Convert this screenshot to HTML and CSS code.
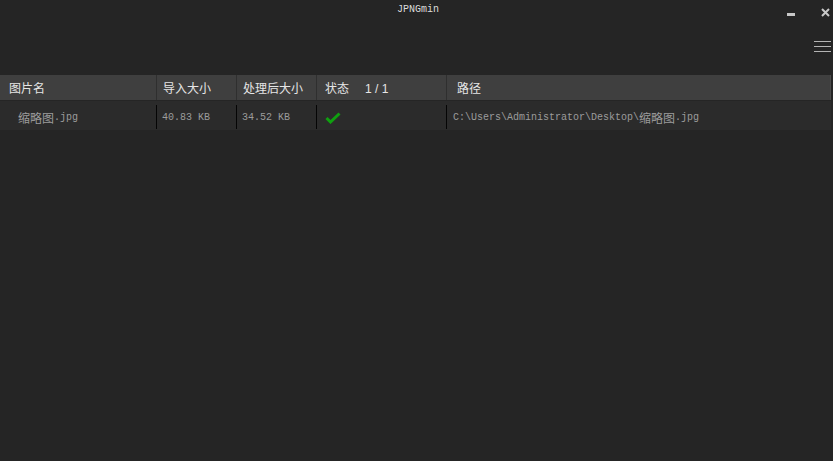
FILE: index.html
```html
<!DOCTYPE html>
<html lang="zh">
<head>
<meta charset="utf-8">
<title>JPNGmin</title>
<link rel="stylesheet" href="styles.css">
</head>
<body>
<div class="app">
  <div class="titlebar">
    <div></div>
    <div class="title">JPNGmin</div>
    <div class="controls">
      <span class="min"></span>
      <svg class="close" width="9" height="9" viewBox="0 0 9 9"><path d="M1 1L8 8M8 1L1 8" stroke="#c8c8c8" stroke-width="2"/></svg>
    </div>
  </div>
  <div class="toolbar">
    <svg class="menu" width="17" height="11" viewBox="0 0 17 11"><path d="M0 0.5H17M0 5.5H17M0 10.5H17" stroke="#b4b4b4" stroke-width="1"/></svg>
  </div>
  <div class="table">
    <div class="thead">
      <div class="th c1">图片名</div>
      <div class="th c2">导入大小</div>
      <div class="th c3">处理后大小</div>
      <div class="th c4">状态<span class="count">1 / 1</span></div>
      <div class="th c5">路径</div>
    </div>
    <div class="row">
      <div class="td c1 name"><span class="cjk">缩略图</span>.jpg</div>
      <div class="td c2">40.83 KB</div>
      <div class="td c3">34.52 KB</div>
      <div class="td c4"><svg width="16" height="12" viewBox="0 0 16 12"><path d="M1.5 6L5.5 10L14.5 1.5" fill="none" stroke="#10a010" stroke-width="3"/></svg></div>
      <div class="td c5 path">C:\Users\Administrator\Desktop\<span class="cjk">缩略图</span>.jpg</div>
    </div>
  </div>
</div>
</body>
</html>
```
FILE: styles.css
```css
html, body {
  margin: 0;
  padding: 0;
  background: #252525;
}
.app {
  width: 833px;
  height: 461px;
  background: #252525;
  overflow: hidden;
}
.titlebar {
  height: 30px;
  display: grid;
  grid-template-columns: 1fr auto 1fr;
}
.title {
  font-family: "Liberation Mono", monospace;
  font-size: 10px;
  color: #dcdcdc;
  line-height: 10px;
  padding-top: 5px;
  padding-left: 3px;
  font-weight: 300;
}
.controls {
  display: flex;
  justify-content: flex-end;
  align-items: flex-start;
  padding-right: 3px;
}
.min {
  width: 8px;
  height: 3px;
  background: #c8c8c8;
  margin-top: 13px;
  margin-right: 26px;
}
.close {
  margin-top: 8px;
}
.toolbar {
  height: 45px;
  display: flex;
  justify-content: flex-end;
  align-items: flex-start;
}
.menu {
  margin-top: 11px;
  margin-right: 2px;
}
.table {
  width: 831px;
}
.thead {
  display: flex;
  height: 25px;
  background: #3f3f3f;
  border-right: 1px solid #4a4a4a;
}
.th {
  font-family: "Noto Sans CJK SC", "Noto Sans", sans-serif;
  font-size: 12px;
  color: #e6e6e6;
  line-height: 25px;
  box-sizing: border-box;
  border-left: 1px solid #2f2f2f;
  padding-left: 6px;
}
.th.c1 {
  border-left: none;
  padding-left: 9px;
}
.th.c4 {
  padding-left: 8px;
}
.th.c5 {
  padding-left: 10px;
}
.count {
  margin-left: 16px;
  font-family: "Liberation Sans", Arial, sans-serif;
  font-size: 12px;
}
.c1 { width: 156px; }
.c2 { width: 80px; }
.c3 { width: 80px; }
.c4 { width: 130px; }
.c5 { flex: 1; }
.row {
  display: flex;
  margin-top: 1px;
  height: 29px;
  background: #2b2b2b;
  align-items: flex-end;
  padding-bottom: 1px;
  box-sizing: border-box;
}
.td {
  font-family: "Liberation Mono", monospace;
  font-size: 10px;
  color: #9c9c9c;
  box-sizing: border-box;
  height: 24px;
  border-left: 1px solid #050505;
  padding-left: 5px;
  padding-top: 1px;
  display: flex;
  align-items: center;
}
.td.c1 {
  border-left: none;
  padding-left: 18px;
}
.td.c4 {
  padding-left: 8px;
}
.td.c5 {
  padding-left: 6px;
}
.cjk {
  font-family: "Noto Sans CJK SC", sans-serif;
  font-size: 12px;
}
```
